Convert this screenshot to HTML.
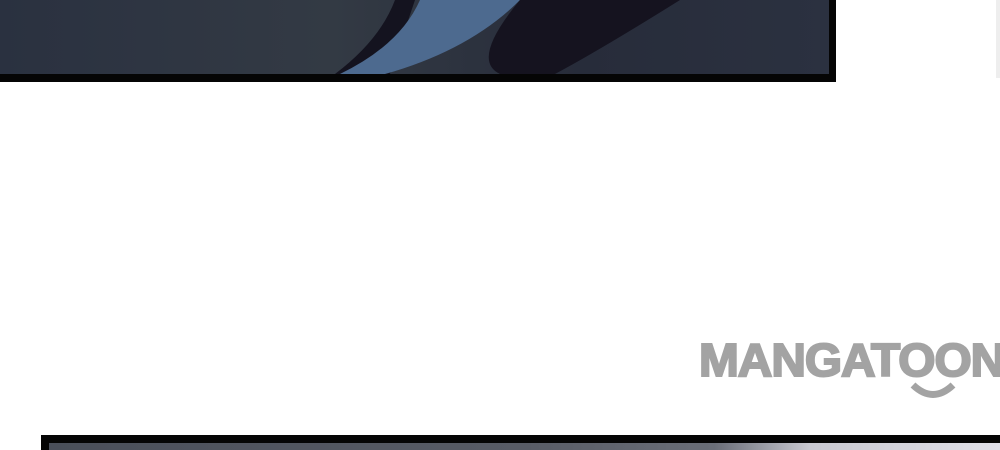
<!DOCTYPE html>
<html><head><style>
body{margin:0;width:1000px;height:450px;background:#fff;position:relative;overflow:hidden}
.p1{position:absolute;left:0;top:0;width:829px;height:74px;background:linear-gradient(90deg,#2a3140,#333a44 40%,#272c3a 70%,#2b3140);border-right:7px solid #050505;border-bottom:8px solid #050505}
.logo{position:absolute;left:699px;top:333px;font:bold 46px "Liberation Sans",sans-serif;color:#a3a3a3;-webkit-text-stroke:2px #a3a3a3;letter-spacing:-1px;transform:scaleX(1.04);transform-origin:left;white-space:nowrap}
.p2{position:absolute;left:41px;top:435px;width:959px;height:15px;background:#050505}
.p2 div{position:absolute;left:8px;top:8px;right:0;bottom:0;background:linear-gradient(90deg,#4a4f5a,#585c66 50%,#6a6e78 70%,#c8c8d0 80%,#e0e0e8)}
</style></head><body>
<div class="p1"><svg width="829" height="74" style="position:absolute;left:0;top:0">
<path d="M395 0 L415 0 L390 74 L335 74 Q380 40 395 0Z" fill="#14131f"/>
<path d="M420 0 L520 0 Q470 50 385 74 L340 74 Q400 45 420 0Z" fill="#4d6a8f"/>
<path d="M520 0 L680 0 Q600 50 555 74 L500 74 Q470 60 520 0Z" fill="#15131f"/>
</svg></div>
<div class="logo">MANGATOON</div>
<svg style="position:absolute;left:910px;top:382px" width="46" height="18"><path d="M3 3 Q23 22 43 3" stroke="#a3a3a3" stroke-width="7" fill="none"/></svg>
<div style="position:absolute;left:996px;top:0;width:4px;height:78px;background:#eee"></div>
<div class="p2"><div></div></div>
</body></html>
